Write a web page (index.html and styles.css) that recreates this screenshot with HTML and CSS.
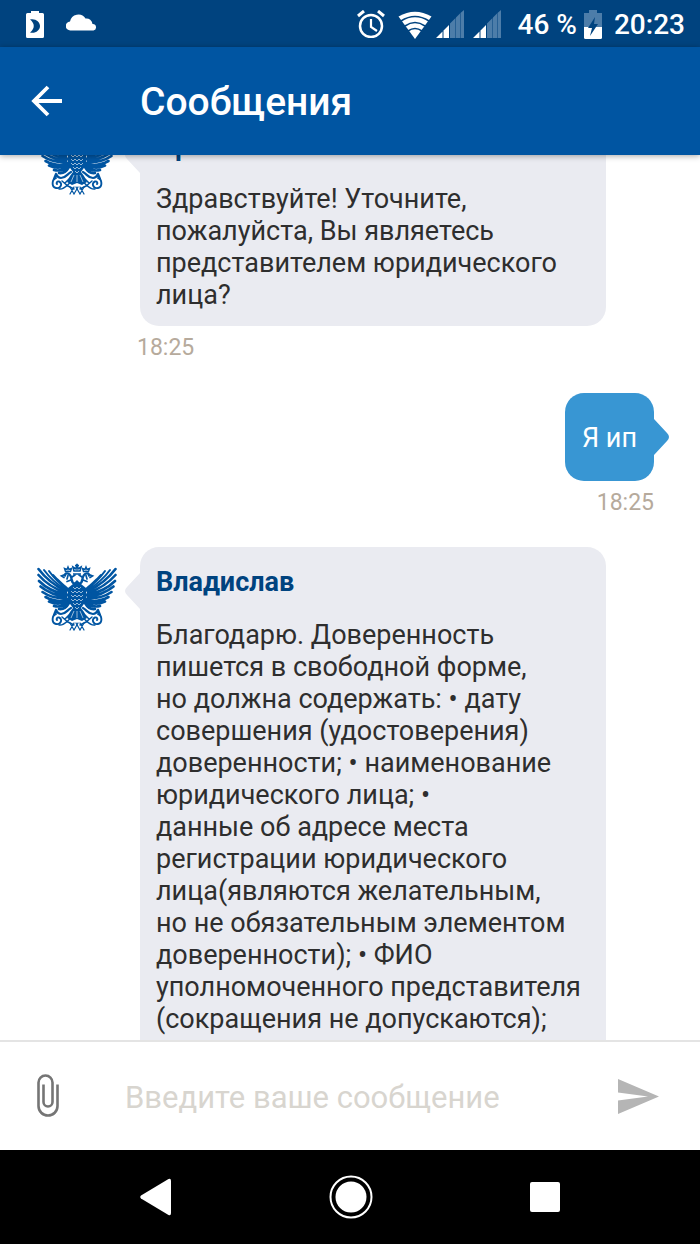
FILE: index.html
```html
<!DOCTYPE html>
<html lang="ru">
<head>
<meta charset="utf-8">
<meta name="viewport" content="width=device-width, initial-scale=1">
<title>Сообщения</title>
<link rel="stylesheet" href="styles.css">
</head>
<body>
<svg class="defs" aria-hidden="true">
  <symbol id="eagle" viewBox="0 0 80 68">
    <g id="eagle-half" fill="none" stroke="currentColor" stroke-linecap="round">
      <path stroke-width="2.600" d="M29 28Q12 20 1.500 6M29 30Q12 24 1.500 12M29 32Q12 28 2 18M29 34Q14 32 3.500 23.500M29 35Q16 36 5.500 29M30 37Q19 40 8.500 34M30 38Q22 43 12 38.500M31 39Q25 45 17 43M32 40Q28 47 22 46"/>
      <path stroke-width="2" d="M30 28Q15 18 7 7M31 27Q19 18 12 8M31 27Q22 19 16 12M32 27Q25 21 20 16M33 28Q28 23 24 20"/>
      <path stroke-width="3" d="M27 31L34 33M28 35L34 38"/>
      <path stroke-width="2.400" d="M38 21C33 20 36 15 33 12C31 9.500 28 10 28 12.500"/>
      <path stroke-width="1.700" d="M28 11.500L24.500 13L27 14.500M31 12.500L30 16M35 14L38 12M34 17L30 18.500"/>
      <path stroke-width="1.400" d="M28.500 8.500L27.500 5.500L30 6.500L31 4L32 6.500L34.500 5.500L33.500 8.500Z"/>
      <path stroke-width="2.200" d="M34 45C30 47 29 51 24 51C21 51 20 49 19 47M19 47L17 52"/>
      <path stroke-width="1.900" d="M19 51C15 52 14 60 19 61C24 62 26 56 22 54.500C20 54 19 56 20 57"/>
      <path stroke-width="1.500" d="M22 62C27 63 30 58 34 55M25 54L31 59L37 62M33 51L28 56"/>
      <path stroke-width="1.200" d="M33 60L37 67L41 60M33 67L37 60"/>
    </g>
    <use href="#eagle-half" transform="matrix(-1 0 0 1 80 0)"/>
    <path fill="currentColor" d="M40 17L44 21L49 25L49 38L44 45L47 49L50 55L45 58L40 56L35 58L30 55L33 49L36 45L31 38L31 25L36 21Z"/>
    <path fill="none" stroke="currentColor" stroke-width="1.600" d="M37 8L36 4L39 6L40 1L41 6L44 4L43 8ZM38 2.500H42M36 11H44"/>
    <path class="eagle-gaps" d="M36 24l2 2l2-2l2 2l2-2M34 28l2 2l2-2l2 2l2-2l2 2l2-2M34 32l2 2l2-2l2 2l2-2l2 2l2-2M34 36l2 2l2-2l2 2l2-2l2 2l2-2M36 40l2 2l2-2l2 2l2-2M38 44l2 2l2-2M37 48l-3 7M40 48v7M43 48l3 7"/>
  </symbol>
</svg>
<div class="screen">
  <div class="status">
    <div class="status-group">
      <svg width="18" height="28" viewBox="0 0 18 28"><path fill="#fff" fill-rule="evenodd" d="M5 0h8v2h3.500q1.500 0 1.500 1.500v22q0 1.500-1.500 1.500h-15q-1.500 0-1.500-1.500v-22q0-1.500 1.500-1.500h3.500zM4 8.500c5 4 5 9 0 13c5 1.500 10-2 10-6.500s-5-8-10-6.500z"/></svg>
      <svg class="cloud" width="31" height="18" viewBox="0 0 31 18"><path fill="#fff" d="M4.500 17.500A4.500 4.500 0 0 1 4 8.500A8.500 8.500 0 0 1 19.500 5.500A6 6 0 0 1 26.500 11A3.300 3.300 0 0 1 27.500 17.500z"/></svg>
    </div>
    <div class="status-group status-right">
      <svg width="28" height="28" viewBox="0 0 28 28" fill="none" stroke="#fff"><circle cx="14" cy="16" r="11" stroke-width="2.500"/><path stroke-width="2.200" d="M14 9v8l6 4"/><path stroke-width="3" d="M1 6l6-5M27 6l-6-5"/></svg>
      <svg class="wifi" width="34" height="28" viewBox="0 0 34 28"><path fill="#fff" d="M.5 5.500Q17-4 33.500 5.500L17 28z"/><path fill="none" stroke="#00437f" stroke-width="1.600" d="M3 10Q17 1 31 10M7 15Q17 8 27 15M10 20Q17 15 24 20"/></svg>
      <svg width="28" height="28" viewBox="0 0 28 28"><path id="sig-dim" fill="#4d7da9" d="M14 13.500l5.500-5.500v20H14zM20 7.500l4-4V28h-4zM24.500 3l3.500-3v28h-3.500z"/><path id="sig-on" fill="#fff" d="M0 28l6.500-6.500V28zM7.500 20.500l5.500-5.500v13H7.500z"/></svg>
      <svg class="signal" width="28" height="28" viewBox="0 0 28 28"><use href="#sig-dim"/><use href="#sig-on"/></svg>
      <span class="percent">46 %</span>
      <svg class="battery" width="18" height="29" viewBox="0 0 18 29"><path fill="#4d7da9" d="M5 0h8v3h5v14H0V3h5z"/><path fill="#fff" d="M0 17h18v10.500q0 1.500-1.500 1.500h-15Q0 29 0 27.500z"/><path fill="#00437f" d="M11 7L4 18h4L6 26l8-12h-4z"/></svg>
      <time>20:23</time>
    </div>
  </div>
  <header class="bar">
    <button class="icon-btn" type="button" aria-label="Назад"><svg width="32" height="32" viewBox="0 0 32 32" fill="none" stroke="#fff" stroke-width="3.800"><path d="M31 16H3M17 2L3 16l14 14"/></svg></button>
    <h1>Сообщения</h1>
  </header>
  <main class="chat">
    <article class="msg msg-first">
      <svg class="avatar" width="80" height="68"><use href="#eagle"/></svg>
      <div class="body">
        <div class="bubble">
          <svg class="tail" width="16" height="36" viewBox="0 0 16 36"><path d="M16 0L3 14q-4 4 0 8l13 14z"/></svg>
          <h2>Ирина</h2>
          <p>Здравствуйте! Уточните,<br>пожалуйста, Вы являетесь<br>представителем юридического<br>лица?</p>
        </div>
        <time>18:25</time>
      </div>
    </article>
    <article class="msg msg-own">
      <div class="body">
        <div class="bubble">
          <svg class="tail" width="16" height="36" viewBox="0 0 16 36"><path d="M0 0l13 14q4 4 0 8L0 36z"/></svg>
          <p>Я ип</p>
        </div>
        <time>18:25</time>
      </div>
    </article>
    <article class="msg msg-last">
      <svg class="avatar" width="80" height="68"><use href="#eagle"/></svg>
      <div class="body">
        <div class="bubble">
          <svg class="tail" width="16" height="36" viewBox="0 0 16 36"><path d="M16 0L3 14q-4 4 0 8l13 14z"/></svg>
          <h2>Владислав</h2>
          <p>Благодарю. Доверенность<br>пишется в свободной форме,<br>но должна содержать: • дату<br>совершения (удостоверения)<br>доверенности; • наименование<br>юридического лица; •<br>данные об адресе места<br>регистрации юридического<br>лица(являются желательным,<br>но не обязательным элементом<br>доверенности); • ФИО<br>уполномоченного представителя<br>(сокращения не допускаются);</p>
        </div>
      </div>
    </article>
  </main>
  <form class="composer">
    <button class="icon-btn" type="button" aria-label="Прикрепить файл"><svg width="24" height="44" viewBox="0 0 24 44" fill="none" stroke="#757575" stroke-width="2.600"><path d="M21.500 10.500V32a9.500 9.500 0 0 1-19 0V8.500a7 7 0 0 1 14 0V28a4.500 4.500 0 0 1-9 0V10.500"/></svg></button>
    <input type="text" aria-label="Сообщение" placeholder="Введите ваше сообщение">
    <button class="icon-btn" type="submit" aria-label="Отправить"><svg width="41" height="35" viewBox="0 0 41 35"><path fill="#b5b5b5" d="M0 0l41 17.500L0 35V21.500l30-4L0 13.500z"/></svg></button>
  </form>
  <nav class="nav">
    <button class="icon-btn" type="button" aria-label="Назад"><svg width="32" height="38" viewBox="0 0 32 38"><path fill="#fff" d="M1 17.500L28.500 1Q31 0 31 3v32q0 3-2.500 2L1 20.500q-1.500-1.500 0-3z"/></svg></button>
    <button class="icon-btn" type="button" aria-label="Домой"><svg width="44" height="44" viewBox="0 0 44 44"><circle cx="22" cy="22" r="20.500" fill="none" stroke="#fff" stroke-width="2"/><circle cx="22" cy="22" r="15.500" fill="#fff"/></svg></button>
    <button class="icon-btn" type="button" aria-label="Обзор"><svg width="30" height="30" viewBox="0 0 30 30"><rect width="30" height="30" rx="2" fill="#fff"/></svg></button>
  </nav>
</div>
</body>
</html>
```
FILE: styles.css
```css
* { box-sizing: border-box; }
body { margin: 0; font-family: Roboto, "Noto Sans", sans-serif; background: #fff; }
h1, h2, p { margin: 0; }
svg { display: block; flex: none; }
.defs { position: absolute; width: 0; height: 0; }
.screen { display: flex; flex-direction: column; height: 100vh; overflow: hidden; }

.status { display: flex; justify-content: space-between; align-items: center; flex: none; height: 47px; padding: 2px 15px 0 26px; background: #00437f; color: #fff; font-size: 28px; font-weight: 500; line-height: 32px; }
.status-group { display: flex; align-items: center; gap: 22px; }
.status-group .cloud { margin-bottom: 5px; }
.status-right { gap: 9px; }
.status-right .wifi { margin: 0 -5px 0 4px; }
.status-right .percent { margin-left: 8px; white-space: nowrap; }
.status-right svg { margin-bottom: 2px; }
.status-right .battery { margin: 0 3px 0 -2px; }

.icon-btn { display: flex; align-items: center; justify-content: center; flex: none; padding: 0; border: 0; background: none; cursor: pointer; }
.bar { position: relative; z-index: 1; display: flex; align-items: center; flex: none; gap: 77px; height: 108px; padding: 0 31px; background: #0055a2; color: #fff; box-shadow: 0 1px 6px rgba(0, 0, 0, .35); }
.bar h1 { padding-top: 2px; font-size: 39px; font-weight: 500; line-height: 48px; }

.chat { flex: 1; min-height: 0; overflow: hidden; }
.msg { display: flex; align-items: flex-start; padding: 0 94px 0 37px; }
.msg-first { margin-top: -44px; }
.avatar { margin-top: 16px; color: #0055a2; }
.eagle-gaps { fill: none; stroke: #fff; stroke-width: .6; }
.body { flex: 1; min-width: 0; margin-left: 23px; }
.bubble { position: relative; padding: 18px 16px 15px; border-radius: 19px; background: #eaebf1; color: #2e2e2e; font-size: 27px; line-height: 32px; }
.bubble h2 { margin-bottom: 20px; color: #00437f; font-size: 27px; font-weight: 700; line-height: 34px; }
.bubble p { white-space: nowrap; }
.tail { position: absolute; top: 26px; right: 100%; fill: #eaebf1; }
.body time { display: block; margin: 6px 0 0 -3px; color: #b6aa9c; font-size: 23px; line-height: 32px; }
.msg-own { justify-content: flex-end; margin-top: 29px; padding-right: 46px; }
.msg-own .body { flex: none; display: flex; flex-direction: column; align-items: flex-end; }
.msg-own .bubble { padding: 29px 17px 27px; background: #3896d3; color: #fff; }
.msg-own .tail { right: auto; left: 100%; fill: #3896d3; }
.msg-last { margin-top: 28px; }
.msg-last .bubble { padding-bottom: 60px; }

.composer { display: flex; align-items: center; flex: none; height: 110px; padding: 0 41px 0 36px; border-top: 2px solid #e4e4e4; background: #fff; }
.composer input { flex: 1; min-width: 0; margin: 0 32px 0 65px; padding: 3px 0 0; border: 0; outline: 0; background: none; font: 31px/40px Roboto, "Noto Sans", sans-serif; color: #2e2e2e; }
.composer input::placeholder { color: #d8d5cf; opacity: 1; }
.nav { display: flex; align-items: center; justify-content: space-between; flex: none; height: 94px; padding: 0 140px 0 140px; background: #000; }
```
